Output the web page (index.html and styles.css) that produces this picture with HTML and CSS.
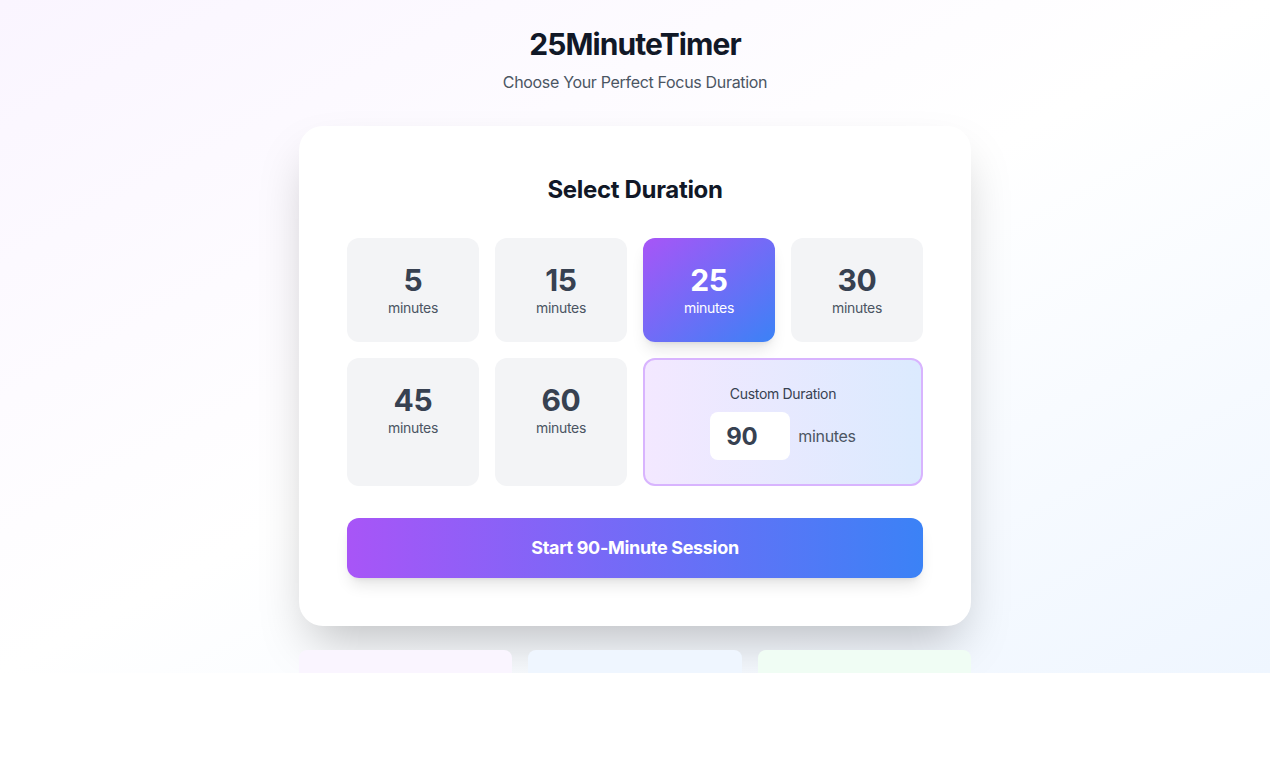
FILE: index.html
```html
<!DOCTYPE html>
<html lang="en">
<head>
    <meta charset="UTF-8">
    <meta name="viewport" content="width=device-width, initial-scale=1.0">
    <title>25MinuteTimer</title>
    <link rel="stylesheet" href="styles.css">
</head>
<body>
    <div class="page">
        <!-- Header -->
        <header class="header">
            <h1 class="title">25MinuteTimer</h1>
            <p class="subtitle">Choose Your Perfect Focus Duration</p>
        </header>

        <!-- Duration Card -->
        <main class="card">
            <h2 class="card-title">Select Duration</h2>

            <div class="duration-grid">
                <button class="duration-btn"><span class="num">5</span><span class="unit">minutes</span></button>
                <button class="duration-btn"><span class="num">15</span><span class="unit">minutes</span></button>
                <button class="duration-btn selected"><span class="num">25</span><span class="unit">minutes</span></button>
                <button class="duration-btn"><span class="num">30</span><span class="unit">minutes</span></button>
                <button class="duration-btn"><span class="num">45</span><span class="unit">minutes</span></button>
                <button class="duration-btn"><span class="num">60</span><span class="unit">minutes</span></button>

                <!-- Custom -->
                <div class="custom">
                    <label class="custom-label" for="customInput">Custom Duration</label>
                    <div class="custom-row">
                        <input class="custom-input" id="customInput" type="text" value="90">
                        <span class="custom-unit">minutes</span>
                    </div>
                </div>
            </div>

            <button class="start-btn">Start 90-Minute Session</button>
        </main>

        <!-- Info cards -->
        <section class="info-grid">
            <div class="info purple"></div>
            <div class="info blue"></div>
            <div class="info green"></div>
        </section>
    </div>
</body>
</html>
```

FILE: styles.css
```css
* {
    margin: 0;
    padding: 0;
    box-sizing: border-box;
}

body {
    background: white;
    font-family: Inter, 'Noto Sans', sans-serif;
    letter-spacing: -0.02em;
}

.page {
    height: 673px;
    overflow: hidden;
    background: linear-gradient(to bottom right, #faf5ff, #ffffff, #eff6ff);
    padding-top: 26px;
    display: flex;
    flex-direction: column;
    align-items: center;
}

/* Header */
.header {
    text-align: center;
    margin-bottom: 32px;
}

.title {
    font-size: 30px;
    line-height: 36px;
    font-weight: 700;
    color: #111827;
    letter-spacing: -0.03em;
    margin-bottom: 8px;
}

.subtitle {
    font-size: 16px;
    line-height: 24px;
    color: #4b5563;
}

/* Card */
.card {
    width: 672px;
    background: white;
    border-radius: 24px;
    padding: 48px;
    box-shadow: 0 25px 50px -12px rgba(0, 0, 0, 0.25);
}

.card-title {
    font-size: 24px;
    line-height: 32px;
    font-weight: 700;
    color: #111827;
    text-align: center;
    margin-bottom: 32px;
}

/* Grid */
.duration-grid {
    display: grid;
    grid-template-columns: repeat(4, 1fr);
    gap: 16px;
    margin-bottom: 32px;
}

.duration-btn {
    display: flex;
    flex-direction: column;
    align-items: center;
    padding: 24px;
    border: none;
    border-radius: 12px;
    background: #f3f4f6;
    font-family: inherit;
    letter-spacing: inherit;
    cursor: pointer;
}

.duration-btn .num {
    font-size: 30px;
    line-height: 36px;
    font-weight: 700;
    color: #374151;
}

.duration-btn .unit {
    font-size: 14px;
    line-height: 20px;
    color: #4b5563;
}

.duration-btn.selected {
    background: linear-gradient(to bottom right, #a855f7, #3b82f6);
    box-shadow: 0 10px 15px -3px rgba(0, 0, 0, 0.1), 0 4px 6px -4px rgba(0, 0, 0, 0.1);
}

.duration-btn.selected .num,
.duration-btn.selected .unit {
    color: white;
}

/* Custom */
.custom {
    grid-column: span 2;
    display: flex;
    flex-direction: column;
    align-items: center;
    padding: 24px;
    border: 2px solid #d8b4fe;
    border-radius: 12px;
    background: linear-gradient(to right, #f3e8ff, #dbeafe);
}

.custom-label {
    font-size: 14px;
    line-height: 20px;
    color: #374151;
    margin-bottom: 8px;
}

.custom-row {
    display: flex;
    align-items: center;
    gap: 8px;
}

.custom-input {
    width: 80px;
    height: 48px;
    padding: 0 16px;
    border: none;
    border-radius: 8px;
    background: white;
    font-family: inherit;
    font-size: 24px;
    font-weight: 700;
    letter-spacing: inherit;
    color: #374151;
    outline: none;
}

.custom-unit {
    font-size: 16px;
    color: #4b5563;
}

/* Start */
.start-btn {
    width: 100%;
    padding: 16px;
    border: none;
    border-radius: 12px;
    background: linear-gradient(to right, #a855f7, #3b82f6);
    color: white;
    font-family: inherit;
    font-size: 18px;
    line-height: 28px;
    font-weight: 700;
    letter-spacing: inherit;
    cursor: pointer;
    box-shadow: 0 10px 15px -3px rgba(0, 0, 0, 0.1), 0 4px 6px -4px rgba(0, 0, 0, 0.1);
}

/* Info cards */
.info-grid {
    width: 672px;
    margin-top: 24px;
    display: grid;
    grid-template-columns: repeat(3, 1fr);
    gap: 16px;
}

.info {
    height: 120px;
    border-radius: 8px;
}

.info.purple { background: #faf5ff; }
.info.blue { background: #eff6ff; }
.info.green { background: #f0fdf4; }
```
